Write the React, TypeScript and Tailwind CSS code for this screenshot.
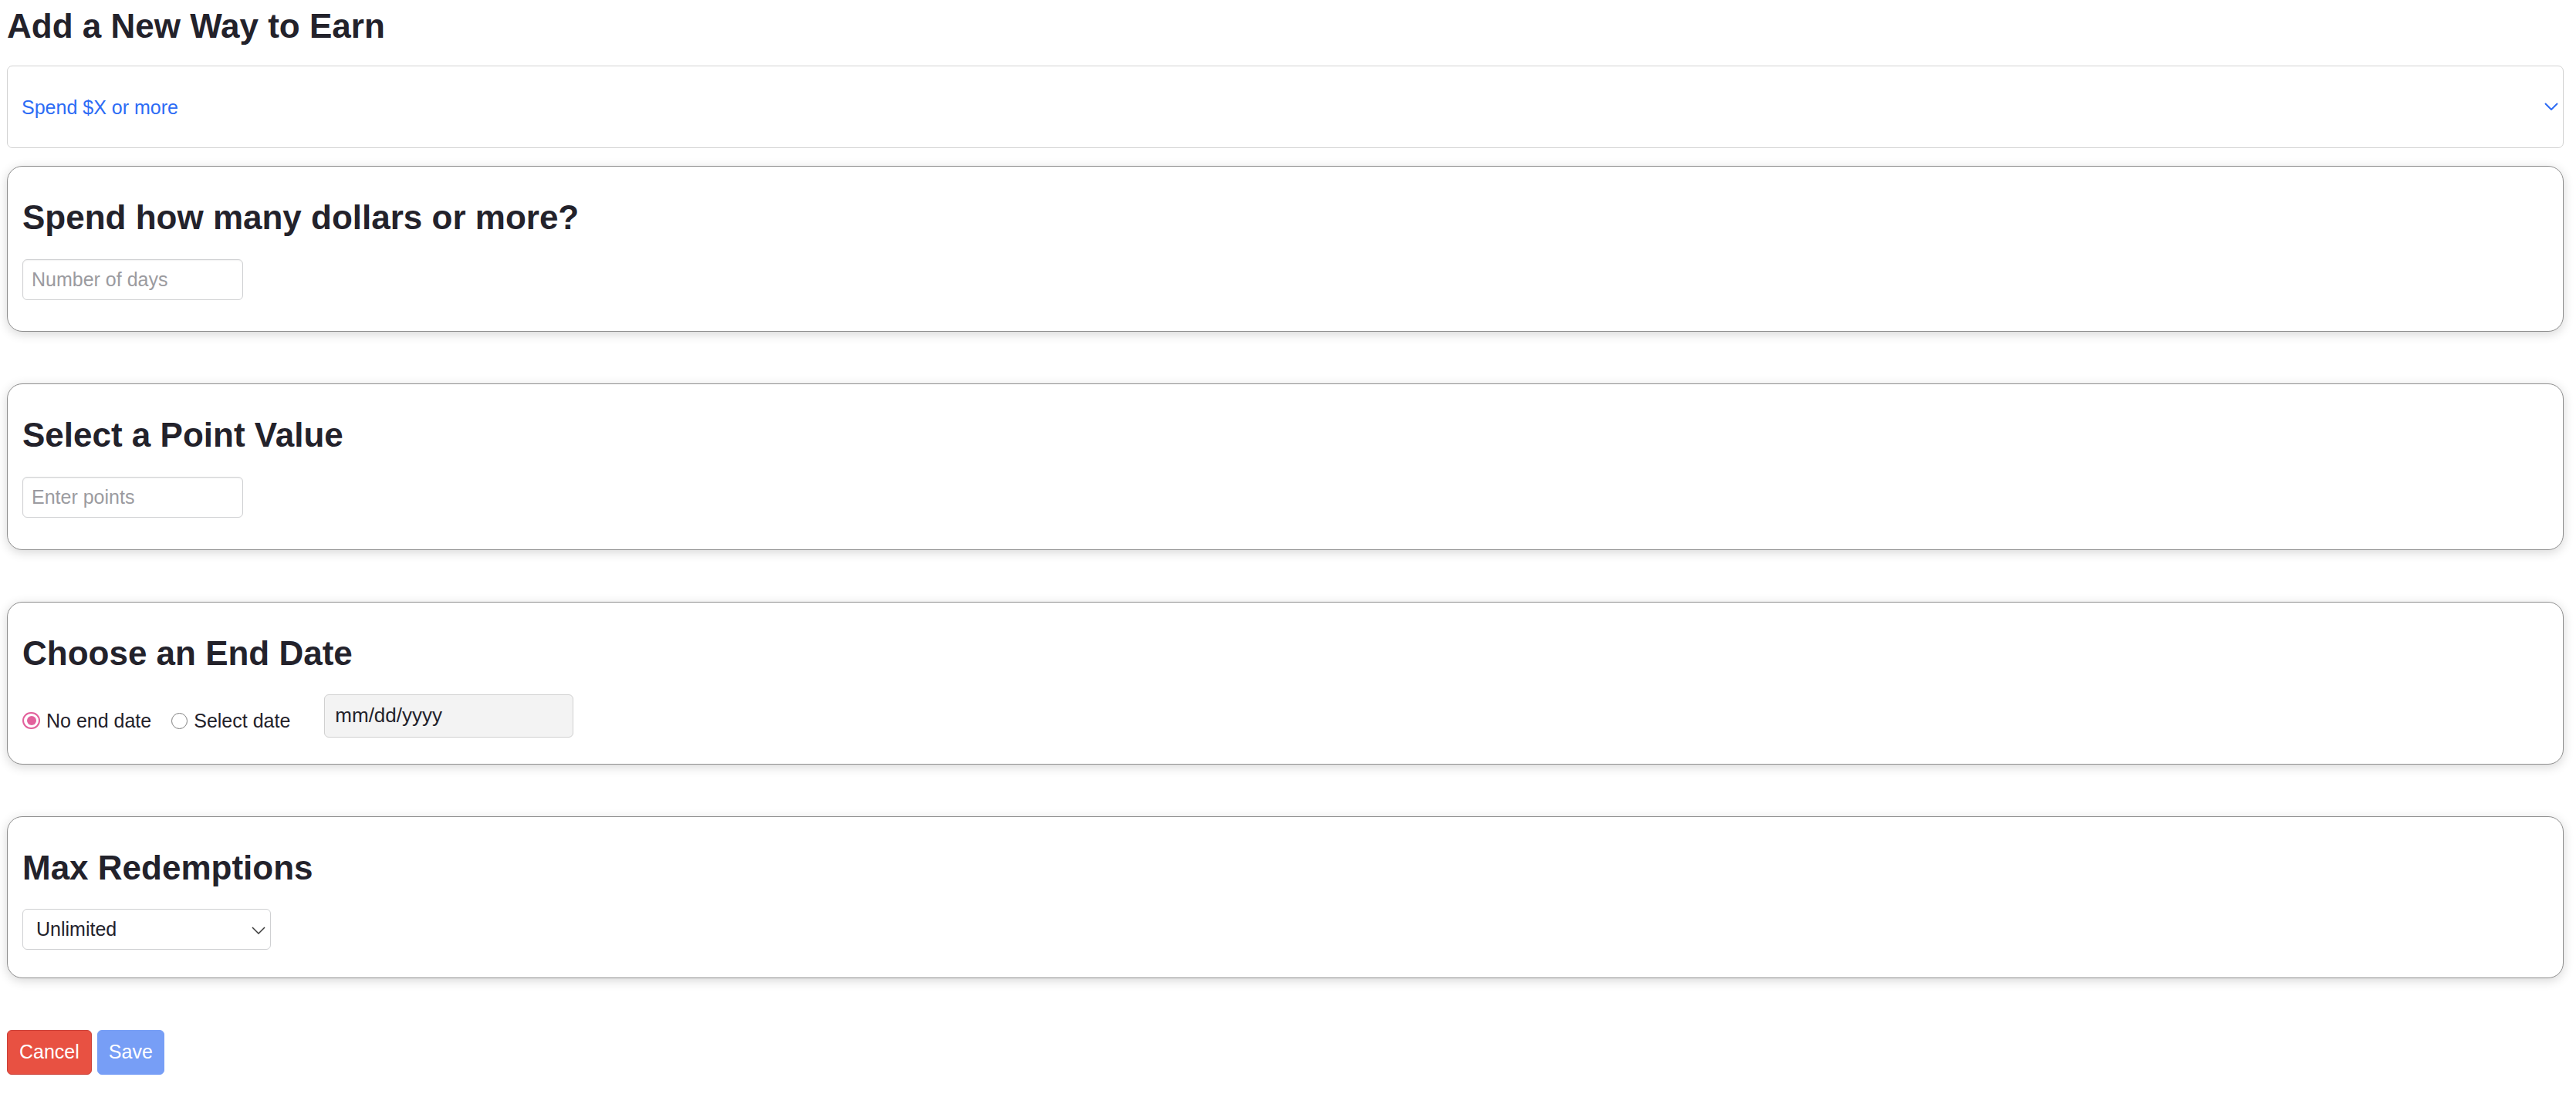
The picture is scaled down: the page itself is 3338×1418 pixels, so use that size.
import { useState } from 'react';

const font = { fontFamily: '"Liberation Sans", Arial, Helvetica, sans-serif' };

function Card({ title, children, gap, bottom }: { title: string; children: React.ReactNode; gap: string; bottom: string }) {
  return (
    <div className={`bg-white border border-[#8e8e8e] rounded-[20px] shadow-[0_3px_14px_rgba(0,0,0,0.16)] pt-10 px-[19px] ${bottom}`}>
      <h2 className="text-[44px] leading-[1.2] font-bold text-[#23222b]">{title}</h2>
      <div className={gap}>{children}</div>
    </div>
  );
}

function Radio({ checked, label, onClick }: { checked: boolean; label: string; onClick: () => void }) {
  return (
    <button type="button" onClick={onClick} className="flex items-center gap-[8px] text-[25px] leading-[30px] text-[#23222b]">
      {checked ? (
        <span className="w-[23px] h-[22px] rounded-full border-2 border-[#e2619c] flex items-center justify-center">
          <span className="w-[12px] h-[12px] rounded-full bg-[#e2619c]" />
        </span>
      ) : (
        <span className="w-[21px] h-[21px] rounded-full border-[1.5px] border-[#7d7d7d]" />
      )}
      {label}
    </button>
  );
}

export default function App() {
  const [noEnd, setNoEnd] = useState(true);

  return (
    <div style={font} className="min-h-screen bg-white pl-[9px] pr-[16px] pt-2 pb-6 text-[#23222b]">
      <h1 className="text-[44px] leading-[1.2] font-bold">Add a New Way to Earn</h1>

      <button
        type="button"
        className="mt-[24px] w-full h-[107px] flex items-center justify-between border border-[#d2d2d2] rounded-[7px] pl-[18px] pr-[6px] text-[25px] text-[#2d6cf5]"
      >
        <span className="mt-[2px]">Spend $X or more</span>
        <svg width="18" height="10" viewBox="0 0 18 10" fill="none" stroke="#2d6cf5" strokeWidth="2">
          <path d="M1 1l8 8 8-8" />
        </svg>
      </button>

      <div className="mt-[23px] flex flex-col gap-[67px]">
        <Card title="Spend how many dollars or more?" gap="mt-[27px] flex" bottom="pb-[40px]">
          <input
            type="text"
            placeholder="Number of days"
            className="w-[286px] h-[53px] border border-[#cfd0d2] rounded-[6px] px-[11px] text-[25px] placeholder:text-[#9b9ba0] shadow-[inset_0_1px_2px_rgba(0,0,0,0.06)] outline-none"
          />
        </Card>

        <Card title="Select a Point Value" gap="mt-[28px] flex" bottom="pb-[41px]">
          <input
            type="text"
            placeholder="Enter points"
            className="w-[286px] h-[53px] border border-[#cfd0d2] rounded-[6px] px-[11px] text-[25px] placeholder:text-[#9b9ba0] shadow-[inset_0_1px_2px_rgba(0,0,0,0.06)] outline-none"
          />
        </Card>

        <Card title="Choose an End Date" gap="mt-[26px]" bottom="pb-[34px]">
          <div className="flex items-end">
            <div className="flex items-center gap-[26px] pb-[7px]">
              <Radio checked={noEnd} label="No end date" onClick={() => setNoEnd(true)} />
              <Radio checked={!noEnd} label="Select date" onClick={() => setNoEnd(false)} />
            </div>
            <input
              type="text"
              readOnly
              value="mm/dd/yyyy"
              className="ml-[44px] w-[323px] h-[56px] bg-[#f3f3f3] border border-[#d0d0d0] rounded-[6px] px-[13px] pb-[2px] text-[26px] text-[#23222b] outline-none"
            />
          </div>
        </Card>

        <Card title="Max Redemptions" gap="mt-[26px] flex" bottom="pb-[36px]">
          <div className="relative w-[322px]">
            <select className="appearance-none w-full h-[53px] border border-[#cfd0d2] rounded-[6px] pl-[17px] text-[25px] text-[#23222b] bg-white outline-none">
              <option>Unlimited</option>
              <option>1</option>
              <option>5</option>
              <option>10</option>
            </select>
            <svg
              className="absolute right-[7px] top-[23px] pointer-events-none"
              width="18"
              height="10"
              viewBox="0 0 18 10"
              fill="none"
              stroke="#3a3a3a"
              strokeWidth="1.5"
            >
              <path d="M1 1l8 8 8-8" />
            </svg>
          </div>
        </Card>
      </div>

      <div className="mt-[67px] flex gap-[7px]">
        <button type="button" className="h-[58px] px-[15px] bg-[#e85142] border border-[#cc4138] rounded-[6px] text-[25px] text-white">
          Cancel
        </button>
        <button type="button" className="h-[58px] px-[14px] bg-[#779ef6] border border-[#779ef6] rounded-[6px] text-[25px] text-white">
          Save
        </button>
      </div>
    </div>
  );
}
